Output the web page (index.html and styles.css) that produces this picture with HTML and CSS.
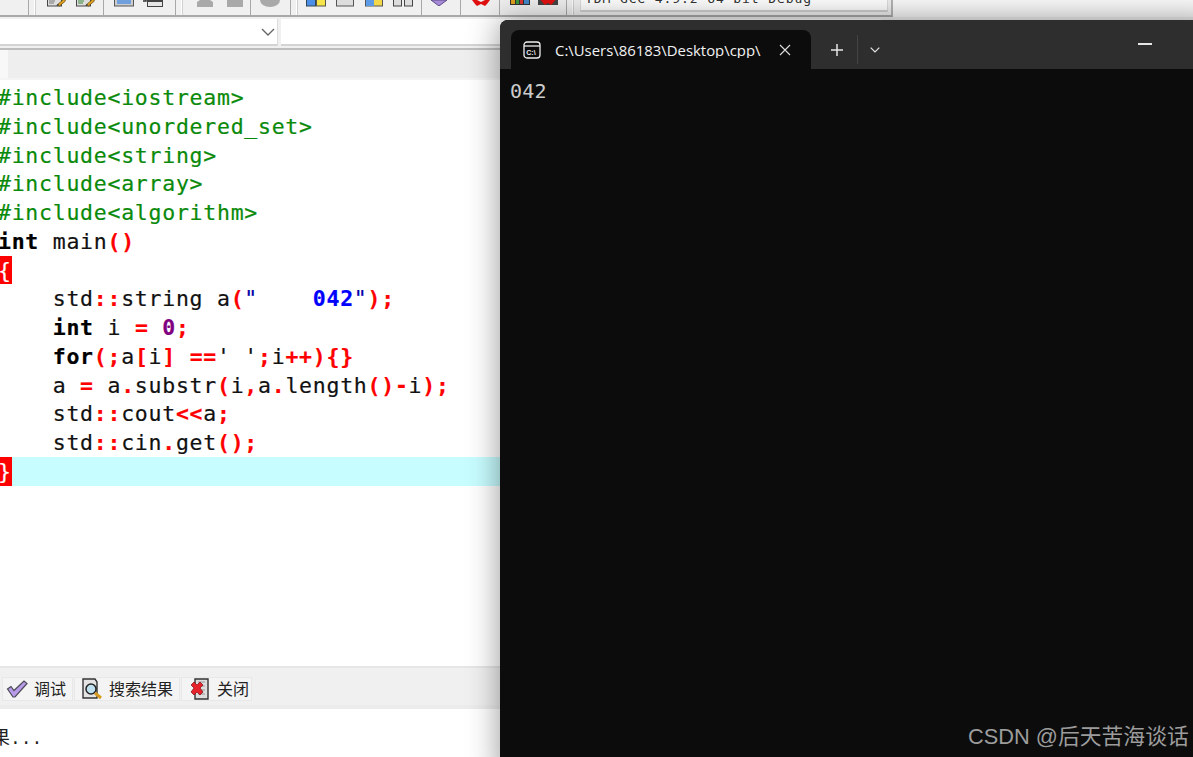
FILE: index.html
```html
<!DOCTYPE html>
<html lang="zh">
<head>
<meta charset="utf-8">
<title>Dev-C++</title>
<link rel="stylesheet" href="styles.css">
</head>
<body>
<div class="ide">
  <div class="toolbar">
    <span class="sep s-a"></span><span class="handle"></span>
    <svg class="ic i-doc1" width="19" height="7" viewBox="0 0 19 7"><rect x="0.5" y="-3" width="14" height="9" fill="#ddd" stroke="#444"/><path d="M2 1h6M2 3h5" stroke="#777"/><path d="M10 5l7-6 1.500 2-6 5z" fill="#e2a21c" stroke="#5a4410" stroke-width=".7"/><path d="M9 6l2-2 1 1z" fill="#234"/></svg>
    <svg class="ic i-doc2" width="19" height="7" viewBox="0 0 19 7"><rect x="0.5" y="-3" width="14" height="9" fill="#ddd" stroke="#444"/><path d="M2 1h6M2 3h5" stroke="#3a8a3a"/><path d="M10 5l7-6 1.500 2-6 5z" fill="#e2a21c" stroke="#5a4410" stroke-width=".7"/><path d="M9 6l2-2 1 1z" fill="#234"/></svg>
    <span class="sep s-b"></span>
    <svg class="ic i-win" width="20" height="7" viewBox="0 0 20 7"><rect x="0.500" y="-3" width="19" height="9" fill="#ccc" stroke="#555"/><rect x="3" y="-3" width="14" height="7" fill="#6f9fdc"/></svg>
    <svg class="ic i-win2" width="20" height="7" viewBox="0 0 20 7"><rect x="4.500" y="0.500" width="15" height="6" fill="#e6e6e6" stroke="#444"/><path d="M0 1h3v-2" fill="none" stroke="#333" stroke-width="1.400"/><path d="M4 1h15" stroke="#444" stroke-width="2"/></svg>
    <span class="sep s-c"></span><span class="handle h-c"></span>
    <svg class="ic i-g1" width="16" height="7" viewBox="0 0 16 7"><path d="M3 0h10l3 2v5H0V2z" fill="#a9a9a9"/></svg>
    <svg class="ic i-g2" width="16" height="7" viewBox="0 0 16 7"><rect width="16" height="7" fill="#a9a9a9"/></svg>
    <span class="sep s-d"></span>
    <svg class="ic i-g3" width="20" height="7" viewBox="0 0 20 7"><path d="M0 0h20a10 7 0 0 1-20 0z" fill="#a9a9a9"/></svg>
    <span class="sep s-e"></span><span class="handle h-e"></span>
    <svg class="ic i-bars" width="20" height="7" viewBox="0 0 20 7"><rect x=".5" y="-2" width="9" height="8" fill="#4b8fe8" stroke="#345"/><rect x="10.500" y="-2" width="9" height="8" fill="#f6e44b" stroke="#554"/></svg>
    <svg class="ic i-box" width="18" height="7" viewBox="0 0 18 7"><rect x=".5" y="-2" width="17" height="8" fill="#ddd" stroke="#555"/></svg>
    <svg class="ic i-mix" width="18" height="7" viewBox="0 0 18 7"><rect x=".5" y="-2" width="17" height="8" fill="#f3d84a" stroke="#555"/><rect x="1" y="-2" width="8" height="8" fill="#5d9be6"/></svg>
    <svg class="ic i-two" width="20" height="7" viewBox="0 0 20 7"><rect x=".5" y="-2" width="8" height="8" fill="#ddd" stroke="#444"/><rect x="11.500" y="-2" width="8" height="8" fill="#ddd" stroke="#444"/></svg>
    <span class="sep s-f"></span>
    <svg class="ic i-dia" width="16" height="6" viewBox="0 0 16 6"><path d="M0 0h16L8 6z" fill="#a98ad8" stroke="#5b4a86"/></svg>
    <span class="sep s-g"></span>
    <svg class="ic i-x" width="18" height="6" viewBox="0 0 18 6"><path d="M0 0h5l4 2 4-2h5l-3 4-2 2-4-2-4 2-2-2z" fill="#e01010"/></svg>
    <span class="sep s-h"></span>
    <svg class="ic i-col" width="20" height="6" viewBox="0 0 20 6"><rect y="-2" width="20" height="8" fill="#333"/><rect x="1" y="-2" width="4" height="7" fill="#e0a020"/><rect x="6" y="-2" width="3" height="7" fill="#3a9a3a"/><rect x="10" y="-2" width="3" height="7" fill="#d33"/><rect x="14" y="-2" width="5" height="7" fill="#48c"/></svg>
    <svg class="ic i-xcol" width="20" height="6" viewBox="0 0 20 6"><rect y="-2" width="20" height="8" fill="#444"/><path d="M2 0h16l-3 4-2 2-3-2-3 2-2-2z" fill="#e01010"/></svg>
    <span class="sep s-i"></span><span class="handle h-i"></span>
    <div class="compiler"><span class="compiler-text">TDM-GCC 4.9.2 64-bit Debug</span><span class="compiler-arrow">⌄</span></div>
  </div>
  <div class="combos">
    <div class="combo combo-class"><svg width="14" height="8" viewBox="0 0 14 8"><path d="M1 1l6 6 6-6" fill="none" stroke="#666" stroke-width="1.400"/></svg></div>
    <div class="combo combo-method"></div>
  </div>
  <div class="filetabs"><span class="tab-stub"></span></div>
  <div class="editor">
    <div class="ln pp">#include&lt;iostream&gt;</div>
    <div class="ln pp">#include&lt;unordered_set&gt;</div>
    <div class="ln pp">#include&lt;string&gt;</div>
    <div class="ln pp">#include&lt;array&gt;</div>
    <div class="ln pp">#include&lt;algorithm&gt;</div>
    <div class="ln"><b>int</b> main<i>()</i></div>
    <div class="ln"><i class="mark">{</i></div>
    <div class="ln">    std<i>::</i>string a<i>(</i><em>"    </em><u>042</u><em>"</em><i>);</i></div>
    <div class="ln">    <b>int</b> i <i>=</i> <s>0</s><i>;</i></div>
    <div class="ln">    <b>for</b><i>(;</i>a<i>[</i>i<i>]</i> <i>==</i>' '<i>;</i>i<i>++){}</i></div>
    <div class="ln">    a <i>=</i> a<i>.</i>substr<i>(</i>i<i>,</i>a<i>.</i>length<i>()-</i>i<i>);</i></div>
    <div class="ln">    std<i>::</i>cout<i>&lt;&lt;</i>a<i>;</i></div>
    <div class="ln">    std<i>::</i>cin<i>.</i>get<i>();</i></div>
    <div class="ln current"><i class="mark">}</i></div>
  </div>
  <div class="msgbar">
    <div class="msgtab tab-debug">
      <svg width="22" height="20" viewBox="0 0 22 20"><path d="M1.500 10l3.500-2.500 3 4L18 2l3 2.500L9 18H7z" fill="#b79be8" stroke="#4b4b55" stroke-width="1.200"/></svg>
      <span>调试</span>
    </div>
    <div class="msgtab tab-search">
      <svg width="21" height="22" viewBox="0 0 21 22"><path d="M1 1h12l2 3v16H1z" fill="#e4e4e4" stroke="#333" stroke-width="1.400"/><circle cx="9" cy="11" r="5" fill="#bfe0ef" stroke="#222" stroke-width="1.500"/><path d="M13 15l6 5" stroke="#d69a20" stroke-width="3"/></svg>
      <span>搜索结果</span>
    </div>
    <div class="msgtab tab-close">
      <svg width="21" height="22" viewBox="0 0 21 22"><path d="M6 1h13v20H6z" fill="#ddd" stroke="#333" stroke-width="1.400"/><path d="M9 4h7M9 8h7M9 12h7M9 16h7" stroke="#999"/><path d="M2 7l3-3 3 3 3-3 3 3-3 3 3 4-3 3-3-3-3 3-3-3 3-4z" fill="#e8222a" stroke="#7a1014" stroke-width=".7"/></svg>
      <span>关闭</span>
    </div>
  </div>
  <div class="log">果...</div>
</div>
<div class="terminal">
  <div class="titlebar">
    <div class="term-tab">
      <svg class="term-icon" width="18" height="18" viewBox="0 0 18 18"><rect x="1" y="1" width="16" height="16" rx="3" fill="none" stroke="#eee" stroke-width="1.300"/><path d="M1 5h16" stroke="#eee" stroke-width="1.300"/><text x="3.300" y="13.500" class="term-icon-text">C:\</text></svg>
      <span class="term-title">C:\Users\86183\Desktop\cpp\</span>
      <svg class="term-close" width="12" height="12" viewBox="0 0 12 12"><path d="M1 1l10 10M11 1L1 11" stroke="#ddd" stroke-width="1.100"/></svg>
    </div>
    <svg class="term-plus" width="14" height="14" viewBox="0 0 14 14"><path d="M7 1v12M1 7h12" stroke="#e6e6e6" stroke-width="1.500"/></svg>
    <span class="term-sep"></span>
    <svg class="term-down" width="10" height="6" viewBox="0 0 10 6"><path d="M.7.7L5 5 9.300.7" fill="none" stroke="#e6e6e6" stroke-width="1.200"/></svg>
    <span class="term-min"></span>
  </div>
  <div class="term-body">042</div>
</div>
<div class="watermark">CSDN @后天苦海谈话</div>
</body>
</html>
```
FILE: styles.css
```css
* { box-sizing: border-box; }
html, body { margin: 0; height: 100%; overflow: hidden; background: #fff; }
body { position: relative; width: 1193px; height: 757px; }

.ide { display: flex; flex-direction: column; height: 757px; background: #fbfbfb; }

.toolbar { display: flex; align-items: flex-end; width: 893px; height: 17px; flex: none; overflow: hidden; background: #f0f0f0; border-bottom: 2px solid #a9a9a9; border-right: 2px solid #b4b4b4; padding-bottom: 8px; }
.ic { display: block; flex: none; }
.sep, .handle { flex: none; width: 1px; height: 15px; margin-bottom: -8px; background: #a8a8a8; }
.handle { width: 2px; background: #d0d0d0; border-left: 1px solid #fff; }
.s-a { margin-left: 28px; }
.handle { margin-left: 5px; }
.i-doc1 { margin-left: 11px; }
.i-doc2 { margin-left: 10px; }
.s-b { margin-left: 8px; }
.i-win { margin-left: 10px; }
.i-win2 { margin-left: 9px; }
.s-c { margin-left: 12px; }
.i-g1 { margin-left: 14px; }
.i-g2 { margin-left: 14px; }
.s-d { margin-left: 7px; }
.i-g3 { margin-left: 9px; }
.s-e { margin-left: 10px; }
.i-bars { margin-left: 8px; }
.i-box { margin-left: 10px; }
.i-mix { margin-left: 11px; }
.i-two { margin-left: 10px; }
.s-f { margin-left: 8px; }
.i-dia { margin-left: 9px; margin-bottom: 1px; }
.s-g { margin-left: 13px; }
.i-x { margin-left: 11px; margin-bottom: 1px; }
.s-h { margin-left: 9px; }
.i-col { margin-left: 10px; margin-bottom: 2px; }
.i-xcol { margin-left: 8px; margin-bottom: 2px; }
.s-i { margin-left: 8px; }
.compiler { flex: none; display: flex; justify-content: space-between; width: 308px; height: 18px; margin-left: 6px; margin-bottom: -5px; padding: 0 4px; background: #fff; border-bottom: 2px solid #cfcfcf; border-right: 1px solid #ddd; border-left: 1px solid #ddd; }
.compiler-text { font: 13px/1 "DejaVu Sans Mono", monospace; letter-spacing: .9px; color: #333; margin-top: -2px; white-space: nowrap; }
.compiler-arrow { font: 12px/1 "DejaVu Sans", sans-serif; color: #555; margin-top: -8px; }

.combos { display: flex; gap: 3px; flex: none; height: 33px; padding: 2px 0 4px; background: #f0f0f0; border-bottom: 2px solid #bdbdbd; }
.combo { height: 27px; background: #fff; border-bottom: 2px solid #d4d4d4; }
.combo-class { display: flex; align-items: center; justify-content: flex-end; width: 278px; padding-right: 2px; border-right: 1px solid #ddd; }
.combo-method { width: 600px; }

.filetabs { flex: none; display: flex; height: 30px; background: #eee; border-bottom: 2px solid #f4f4f4; }
.tab-stub { width: 8px; background: #f8f8f8; }

.editor { flex: 1; min-height: 0; padding-top: 3px; background: #fff; font: 21.500px/30.750px "DejaVu Sans Mono", "Liberation Mono", monospace; letter-spacing: .74px; color: #111; -webkit-text-stroke: .2px; }
.ln { height: 28.750px; margin-left: -2px; white-space: pre; }
.pp { color: #0a8a0a; }
.ln b { font-weight: 700; color: #000; }
.ln i { font-style: normal; font-weight: 700; color: #f00; }
.ln em { font-style: normal; color: #00a; }
.ln u { text-decoration: none; font-weight: 700; color: #00f; }
.ln s { text-decoration: none; font-weight: 700; color: #800080; }
.ln .mark { display: inline-block; height: 28.750px; background: #f00; color: #fff; font-weight: 400; }
.current { background: #c8fdff; margin-left: 0; }
.current .mark { margin-left: -2px; }

.msgbar { flex: none; display: flex; gap: 1px; align-items: flex-end; height: 39px; padding: 0 0 4px 2px; background: #f0f0f0; border-top: 2px solid #e6e6e6; font: 16px/1 "Noto Sans CJK SC", sans-serif; color: #222; }
.msgtab { display: flex; align-items: center; height: 24px; padding-bottom: 3px; background: #f4f4f4; border: 1px solid #e8e8e8; }
.msgtab svg { flex: none; margin-top: 2px; }
.msgtab span { white-space: nowrap; }
.tab-debug { width: 71px; gap: 6px; padding-left: 3px; }
.tab-search { width: 106px; gap: 6px; padding-left: 7px; }
.tab-close { width: 71px; gap: 7px; padding-left: 7px; }

.log { flex: none; height: 52px; padding-top: 19px; background: #fff; border-top: 4px solid #ececec; font: 18px/1.300 "Liberation Mono", "Noto Sans CJK SC", monospace; color: #222; text-indent: -8px; }

.terminal { position: absolute; left: 500px; top: 20px; width: 720px; height: 760px; display: flex; flex-direction: column; background: #0c0c0c; border-radius: 8px 8px 0 0; box-shadow: 0 0 32px rgba(0, 0, 0, .42); }
.titlebar { flex: none; display: flex; align-items: center; height: 49px; padding-top: 10px; padding-left: 11px; background: #2e2e2e; border-radius: 8px 8px 0 0; }
.term-tab { flex: none; display: flex; align-items: center; width: 300px; height: 39px; padding-left: 12px; background: #0c0c0c; border-radius: 8px 8px 0 0; }
.term-icon { flex: none; }
.term-icon-text { font: 700 7px "Liberation Sans", sans-serif; fill: #eee; }
.term-title { margin-left: 14px; width: 218px; padding-top: 2px; font: 14.900px/1 "Open Sans", sans-serif; color: #f2f2f2; white-space: nowrap; overflow: hidden; }
.term-close { flex: none; margin-left: 6px; }
.term-plus { flex: none; margin-left: 19px; }
.term-sep { flex: none; width: 1px; height: 29px; margin-left: 13px; background: #444; }
.term-down { flex: none; margin-left: 12px; }
.term-min { flex: none; width: 14px; height: 1.500px; margin-left: 258px; margin-top: -11px; background: #e6e6e6; }
.term-body { flex: 1; padding: 9px 10px; font: 20px/26px "DejaVu Sans Mono", monospace; letter-spacing: .15px; color: #cccccc; }

.watermark { position: absolute; left: 968px; top: 721px; font: 21.800px/32px "Liberation Sans", "Noto Sans CJK SC", sans-serif; color: #9c9c9c; white-space: nowrap; }
```
